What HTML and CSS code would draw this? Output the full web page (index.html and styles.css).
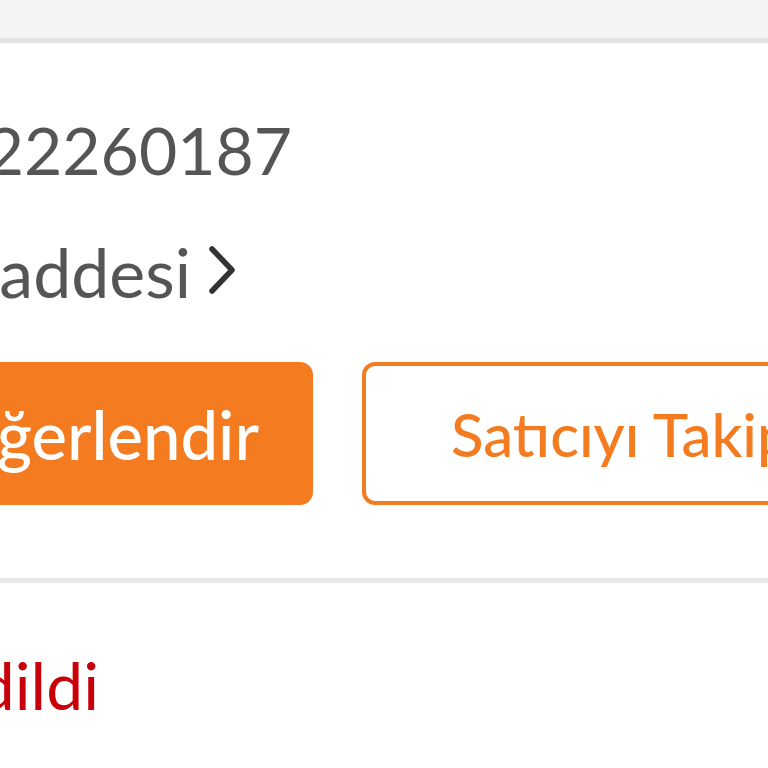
FILE: index.html
```html
<!DOCTYPE html>
<html lang="tr">
<head>
    <meta charset="UTF-8">
    <meta name="viewport" content="width=device-width, initial-scale=1.0">
    <title>Satıcı</title>
    <link rel="stylesheet" href="styles.css">
</head>
<body>
    <div class="topbar"></div>
    <div class="seller">
        <div class="line phone">
            <span>Telefon: 0212 22260187</span>
        </div>
        <div class="line address">
            <span>Atatürk Caddesi</span>
            <svg class="chevron" width="28" height="48" viewBox="0 0 28 48">
                <path d="M4 3 L24 24 L4 45" fill="none" stroke="#333" stroke-width="5.5" stroke-linecap="round" stroke-linejoin="round"/>
            </svg>
        </div>
        <div class="actions">
            <a class="button primary" href="#">Değerlendir</a>
            <a class="button outline" href="#">Satıcıyı Takip Et</a>
        </div>
    </div>
    <div class="status">
        <div class="line delivered">
            <span>Teslim edildi</span>
        </div>
    </div>
</body>
</html>
```

FILE: styles.css
```css
* {
    box-sizing: border-box;
}
html, body {
    margin: 0;
    width: 768px;
    height: 768px;
    overflow: hidden;
    background: #fff;
    font-family: Lato, "Noto Sans", sans-serif;
}
.topbar {
    height: 43px;
    background: #f4f4f4;
    border-bottom: 5px solid #e3e3e3;
}
.seller {
    padding: 67px 0 73px;
    border-bottom: 5px solid #e8e8e8;
}
.line {
    display: flex;
    justify-content: flex-end;
    align-items: center;
    white-space: nowrap;
    font-size: 66px;
    line-height: 80px;
    color: #555;
}
.phone {
    width: 292px;
}
.address {
    width: 236px;
    margin-top: 42px;
    font-size: 68px;
}
.chevron {
    flex: none;
    margin-left: 17px;
    margin-top: -4px;
}
.actions {
    display: flex;
    gap: 49px;
    margin-top: 50px;
    margin-left: -120px;
}
.button {
    display: flex;
    align-items: center;
    height: 143px;
    border-radius: 13px;
    font-size: 60px;
    font-weight: 500;
    text-decoration: none;
    white-space: nowrap;
    overflow: hidden;
}
.primary {
    flex: 0 0 433px;
    justify-content: flex-end;
    padding-right: 54px;
    background: #f47b20;
    color: #fff;
    font-size: 67px;
}
.outline {
    flex: 0 0 520px;
    padding-left: 85px;
    border: 4px solid #f47b20;
    color: #f47b20;
}
.status {
    padding-top: 62px;
}
.delivered {
    width: 99px;
    color: #c8000a;
}
```
